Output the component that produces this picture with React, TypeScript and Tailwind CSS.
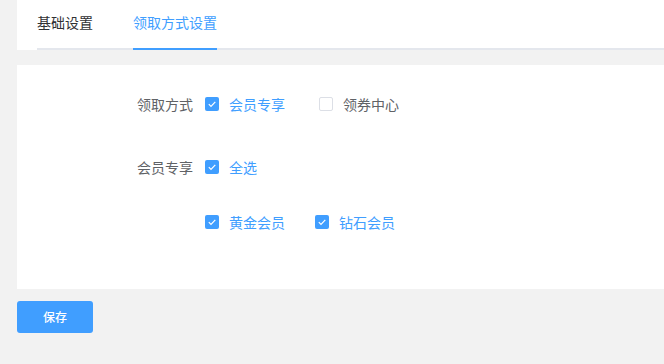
import React from "react";

const font = { fontFamily: '"Noto Sans CJK SC", "Noto Sans", sans-serif' };

function Box({ checked }: { checked: boolean }) {
  return checked ? (
    <span className="relative h-[14px] w-[14px] shrink-0 rounded-[2px] bg-[#409eff]">
      <svg className="absolute left-0 top-0" width="14" height="14" viewBox="0 0 14 14">
        <path d="M3.8 7.1 L6 9.3 L10.3 4.8" fill="none" stroke="#fff" strokeWidth="1.2" />
      </svg>
    </span>
  ) : (
    <span className="h-[14px] w-[14px] shrink-0 rounded-[2px] border border-[#dcdfe6] bg-white" />
  );
}

function Check({ checked, label, className = "" }: { checked: boolean; label: string; className?: string }) {
  return (
    <span className={"flex items-center " + className}>
      <Box checked={checked} />
      <span className={"pl-[10px] text-[14px] leading-[20px] " + (checked ? "text-[#409eff]" : "text-[#606266]")}>{label}</span>
    </span>
  );
}

export default function App() {
  return (
    <div className="min-h-[364px] w-[664px] bg-[#f2f2f2] pl-[17px]" style={font}>
      <div className="bg-white pl-[20px]">
        <div className="flex border-b-2 border-[#e4e7ed]">
          <div className="-mb-[2px] h-[50px] border-b-2 border-transparent pt-[12px] text-[14px] leading-[20px] text-[#303133]">基础设置</div>
          <div className="-mb-[2px] ml-[40px] h-[50px] border-b-2 border-[#409eff] pt-[12px] text-[14px] leading-[20px] text-[#409eff]">领取方式设置</div>
        </div>
      </div>
      <div className="mt-[15px] h-[224px] bg-white pt-[19px]">
        <div className="flex h-[40px] items-center">
          <div className="w-[188px] pr-[12px] text-right text-[14px] leading-[20px] text-[#606266]">领取方式</div>
          <Check checked label="会员专享" />
          <Check checked={false} label="领券中心" className="ml-[34px]" />
        </div>
        <div className="mt-[23px] flex h-[40px] items-center">
          <div className="w-[188px] pr-[12px] text-right text-[14px] leading-[20px] text-[#606266]">会员专享</div>
          <Check checked label="全选" />
        </div>
        <div className="mt-[15px] flex h-[40px] items-center pl-[188px]">
          <Check checked label="黄金会员" />
          <Check checked label="钻石会员" className="ml-[30px]" />
        </div>
      </div>
      <button className="mt-[12px] flex h-[32px] w-[76px] items-center justify-center rounded-[3px] bg-[#409eff] text-[12px] font-medium text-white">
        保存
      </button>
    </div>
  );
}
